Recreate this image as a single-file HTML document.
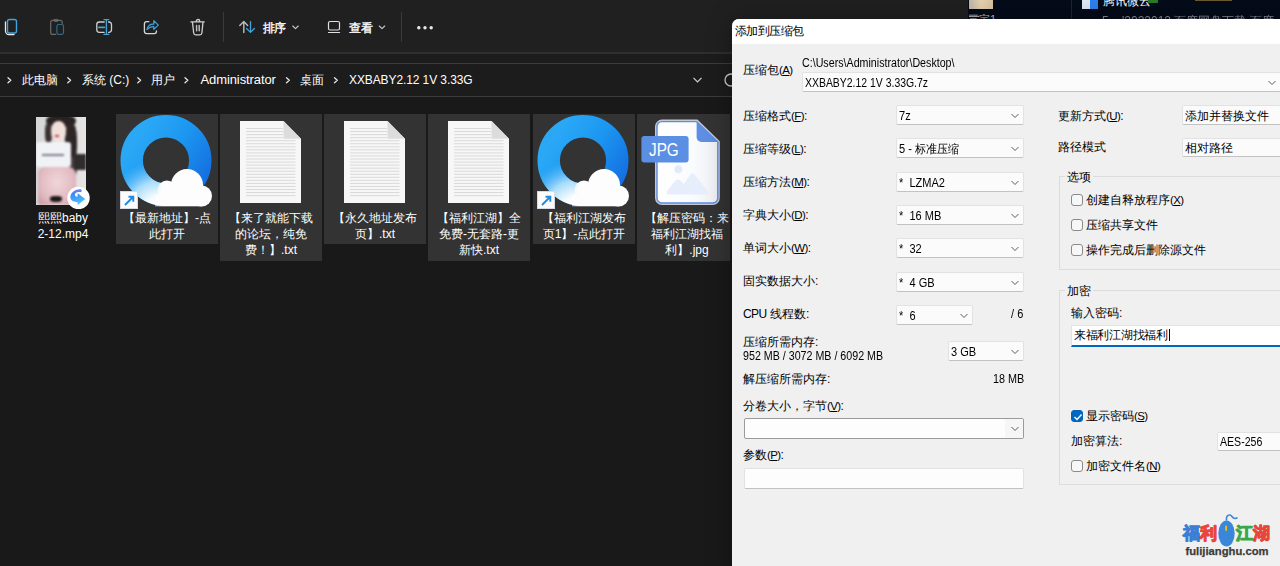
<!DOCTYPE html>
<html><head><meta charset="utf-8">
<style>
*{box-sizing:border-box;margin:0;padding:0}
html,body{width:1280px;height:566px;overflow:hidden;background:#191919;font-family:"Liberation Sans",sans-serif;}
.a{position:absolute}
.bc{color:#ffffff;font-size:12px;top:73px;white-space:nowrap;line-height:14px}
.item{background:#333333}
.lbl{color:#ffffff;font-size:12px;line-height:16px;text-align:center;white-space:nowrap}
.t{color:#000;font-size:12px;white-space:nowrap;line-height:14px}
.n{display:inline-block;transform-origin:0 50%}
.mn{font-size:11.5px;letter-spacing:-0.6px}
.cb{background:#fbfbfb;border:1px solid #e2e2e2;border-bottom-color:#c2c2c2;border-radius:2px}
.cbt{font-size:12px;color:#000;white-space:nowrap;line-height:14px}
.dd{width:10px;height:6px}
.chk{width:12px;height:12px;border:1px solid #8a8a8a;border-radius:3px;background:#f7f7f7}
.grp{border:1px solid #dcdcdc}
</style></head><body>
<div class="a" style="left:0;top:0;width:1280px;height:53px;background:#202020"></div>
<div class="a" style="left:0;top:52px;width:1280px;height:2px;background:#2f2f2f"></div>
<div class="a" style="left:0;top:54px;width:1280px;height:9px;background:#1c1c1c"></div>
<div class="a" style="left:0;top:63px;width:1280px;height:34px;background:#1c1c1c;border-top:1px solid #3c3c3c;border-bottom:1px solid #3c3c3c"></div>

<div class="a" style="left:968px;top:0;width:312px;height:20px;background:#040b19"></div>
<div class="a" style="left:969px;top:0;width:24px;height:9px;background:linear-gradient(90deg,#bfb6a8,#e6d2b0 50%,#d8c3a0)"></div>
<div class="a" style="left:969px;top:16px;width:10px;height:1px;background:#aaa"></div>
<div class="a" style="left:968px;top:12px;color:#bbb;font-size:11px;line-height:14px">三宝1</div>
<div class="a" style="left:1071px;top:0;width:1px;height:19px;background:#1e2533"></div>
<div class="a" style="left:1082px;top:0;width:16px;height:9px;background:#2f80ed"></div>
<div class="a" style="left:1082px;top:0;width:8px;height:9px;background:#dfe9f7"></div>
<div class="a" style="left:1103px;top:-6px;color:#fff;font-size:12px;line-height:14px">腾讯微云</div>
<div class="a" style="left:1148px;top:0;width:10px;height:3px;background:#2b7a2b"></div>
<div class="a" style="left:1195px;top:0;width:37px;height:1px;background:#6b5a30"></div>
<div class="a" style="left:1102px;top:14px;color:#aab;font-size:12px;line-height:14px;white-space:nowrap;opacity:.8">5... '2022012 百度网盘下载 百度</div>

<svg class="a" style="left:0;top:0" width="460" height="53" viewBox="0 0 460 53">
<g fill="none" stroke-linecap="round" stroke-linejoin="round">
 <path d="M5.5 22 V31 a3.5 3.5 0 0 0 3.5 3.5 H14" stroke="#e8e8e8" stroke-width="1.3"/>
 <rect x="7.5" y="19.5" width="9" height="13.5" rx="2" stroke="#40a3dc" stroke-width="1.4"/>
 <path d="M55.8 34.4 H52.7 a2 2 0 0 1 -2 -2 V22.3 a2 2 0 0 1 2 -2 H60.2 a2 2 0 0 1 2 2 V23.4" stroke="#6a6a6a" stroke-width="1.2"/>
 <ellipse cx="56" cy="20.3" rx="2.3" ry="1.1" stroke="#6a6a6a" stroke-width="1.1"/>
 <rect x="56.9" y="24.5" width="6.6" height="9.8" rx="1.8" stroke="#2d6b8f" stroke-width="1.2"/>
 <path d="M104.2 22 H99.3 a2.5 2.5 0 0 0 -2.5 2.5 V29.8 a2.5 2.5 0 0 0 2.5 2.5 H104.2" stroke="#cfcfcf" stroke-width="1.3"/>
 <path d="M108.6 22 H109 a2.5 2.5 0 0 1 2.5 2.5 V29.8 a2.5 2.5 0 0 1 -2.5 2.5 H108.6" stroke="#cfcfcf" stroke-width="1.3"/>
 <path d="M106.4 19.8 V34.2 M104 19.6 H108.8 M104 34.4 H108.8" stroke="#40a3dc" stroke-width="1.3"/>
 <path d="M98.9 27.3 H104.4" stroke="#40a3dc" stroke-width="1.8"/>
 <path d="M148.8 21.7 H146.7 a2.3 2.3 0 0 0 -2.3 2.3 V31.3 a2.3 2.3 0 0 0 2.3 2.3 H154.2 a2.3 2.3 0 0 0 2.3 -2.3 V30.8" stroke="#d6d6d6" stroke-width="1.3"/>
 <path d="M146.9 29.6 C148 25.5 151 23.9 153.8 24.2 V20.6 L158.3 25.1 L153.8 29.4 V26.6 C151.3 26.4 149 27.4 146.9 29.6 Z" stroke="#40a3dc" stroke-width="1.2"/>
 <path d="M190.9 21.9 H204.2 M196.3 21.9 V21 a1.7 1.5 0 0 1 3.4 0 V21.9 M192.4 21.9 L193.7 33 a2 2 0 0 0 2 1.8 H199.9 a2 2 0 0 0 2 -1.8 L203 21.9" stroke="#cfcfcf" stroke-width="1.3"/><path d="M196.6 25.6 V30.7 M199.2 25.6 V30.7" stroke="#bdbdbd" stroke-width="1.5"/>
 <path d="M243.8 32.6 V21.6 M239.8 25.6 L243.8 21.6 L247.6 25.4" stroke="#bdbdbd" stroke-width="1.4"/>
 <path d="M250.5 21.6 V32.4 M246.5 28.5 L250.5 32.4 L254.4 28.5" stroke="#40a3dc" stroke-width="1.3"/>
 <path d="M292.8 26 L295.5 28.7 L298.2 26" stroke="#c8c8c8" stroke-width="1.1"/>
 <rect x="328.5" y="21.5" width="11" height="8.5" rx="1.5" stroke="#e0e0e0" stroke-width="1.2"/>
 <path d="M328.5 32.5 H339.6" stroke="#e0e0e0" stroke-width="1.2"/>
 <path d="M379.3 26 L382 28.7 L384.7 26" stroke="#c8c8c8" stroke-width="1.1"/>
</g>
<g fill="#e8e8e8"><circle cx="418.8" cy="27.8" r="1.7"/><circle cx="425" cy="27.8" r="1.7"/><circle cx="431.2" cy="27.8" r="1.7"/></g>
<rect x="223" y="12" width="1" height="30" fill="#3a3a3a"/>
<rect x="401" y="12" width="1" height="30" fill="#3a3a3a"/>
</svg>
<div class="a" style="left:262.5px;top:21px;color:#fff;font-size:12px;line-height:14px;letter-spacing:-0.3px;-webkit-text-stroke:.35px #fff">排序</div>
<div class="a" style="left:349px;top:21px;color:#fff;font-size:12px;line-height:14px;letter-spacing:-0.3px;-webkit-text-stroke:.35px #fff">查看</div>
<svg class="a" style="left:0;top:63px" width="740" height="34" viewBox="0 0 740 34"><g fill="none" stroke="#e6e6e6" stroke-width="1.3" stroke-linecap="round" stroke-linejoin="round">
<path d="M8 14.8 L10.8 17.3 L8 19.8"/><path d="M67.8 14.8 L70.6 17.3 L67.8 19.8"/><path d="M137.8 14.8 L140.6 17.3 L137.8 19.8"/><path d="M185 14.8 L187.8 17.3 L185 19.8"/><path d="M286.5 14.8 L289.3 17.3 L286.5 19.8"/><path d="M334.5 14.8 L337.3 17.3 L334.5 19.8"/>
</g><path d="M693.5 14.8 L697.5 18.8 L701.5 14.8" fill="none" stroke="#d0d0d0" stroke-width="1.2"/>
<circle cx="731" cy="17" r="6" fill="none" stroke="#cfcfcf" stroke-width="1.3"/></svg>
<div class="a bc" style="left:22px;">此电脑</div>
<div class="a bc" style="left:82px;">系统 (C:)</div>
<div class="a bc" style="left:151px;">用户</div>
<div class="a bc" style="left:200.5px;font-size:13px;letter-spacing:-0.1px">Administrator</div>
<div class="a bc" style="left:300px;">桌面</div>
<div class="a bc" style="left:349px;letter-spacing:-0.1px">XXBABY2.12 1V 3.33G</div>
<div class="a item" style="left:116px;top:114px;width:102px;height:130px"></div>
<div class="a item" style="left:220px;top:114px;width:102px;height:147px"></div>
<div class="a item" style="left:324px;top:114px;width:102px;height:130px"></div>
<div class="a item" style="left:428px;top:114px;width:102px;height:147px"></div>
<div class="a item" style="left:533px;top:114px;width:102px;height:130px"></div>
<div class="a item" style="left:637px;top:114px;width:93px;height:147px"></div>
<div class="a" style="left:36px;top:117px;width:50px;height:88px;overflow:hidden;background:linear-gradient(90deg,#d6d6d8,#e6e4e3)">
<div class="a" style="left:0;top:0;width:50px;height:88px;filter:blur(1.3px)">
<div class="a" style="left:10px;top:-3px;width:30px;height:14px;border-radius:50%;background:#2a2122"></div>
<div class="a" style="left:9px;top:6px;width:7px;height:20px;border-radius:40%;background:#3a3030"></div>
<div class="a" style="left:29px;top:6px;width:12px;height:40px;border-radius:40%;background:#2e2526"></div>
<div class="a" style="left:33px;top:40px;width:8px;height:20px;border-radius:40%;background:#4a3e3e"></div>
<div class="a" style="left:15px;top:4px;width:15px;height:21px;border-radius:45%;background:#f1e0da"></div>
<div class="a" style="left:19px;top:18px;width:4px;height:2px;background:#c04060"></div>
<div class="a" style="left:0px;top:25px;width:35px;height:25px;border-radius:3px;background:#f1f2f6"></div>
<div class="a" style="left:6px;top:37px;width:22px;height:2px;background:#7a7e90"></div>
<div class="a" style="left:2px;top:50px;width:38px;height:38px;border-radius:20% 20% 10% 10%;background:radial-gradient(ellipse at 50% 40%,#efd6d9 0%,#e2bcc2 60%,#c995a0 100%)"></div>
<div class="a" style="left:38px;top:37px;width:12px;height:16px;background:#2f2c2e"></div>
<div class="a" style="left:14px;top:79px;width:12px;height:6px;background:#1e1819;border-radius:40%"></div>
</div></div>

<svg class="a" style="left:67px;top:186px" width="23" height="23" viewBox="0 0 23 23"><defs><linearGradient id="sa" x1="0" y1="0" x2="0.3" y2="1"><stop offset="0" stop-color="#a070f0"/><stop offset="0.35" stop-color="#3d8cf6"/><stop offset="1" stop-color="#4fc0fb"/></linearGradient></defs><circle cx="11.5" cy="12" r="11.2" fill="#fff"/><path d="M14.5 3.4 C7.5 2.6 3 7.5 3.4 11.8 C3.9 15 7 16.3 10.6 16.2 V18.9 L18.3 13 L10.6 7.2 V10.6 C8.6 10.8 7.5 9.6 8.1 8 C8.7 6.4 11 5.8 14.5 6.2 Z" fill="url(#sa)"/></svg>
<div class="a lbl" style="left:26px;top:210px;width:74px">熙熙baby<br>2-12.mp4</div>
<svg class="a" style="left:119px;top:114px" width="94" height="94" viewBox="0 0 94 94">
<defs><linearGradient id="g1" gradientUnits="userSpaceOnUse" x1="15" y1="30" x2="85" y2="75"><stop offset="0" stop-color="#2aa8f6"/><stop offset="0.45" stop-color="#1c97f1"/><stop offset="1" stop-color="#146ddf"/></linearGradient>
<radialGradient id="w1" gradientUnits="userSpaceOnUse" cx="40" cy="98" r="52"><stop offset="0" stop-color="#ffffff"/><stop offset="0.3" stop-color="#f6fcff"/><stop offset="0.6" stop-color="#a8dcfb"/><stop offset="1" stop-color="#60befa" stop-opacity="0"/></radialGradient>
<linearGradient id="m1" gradientUnits="userSpaceOnUse" x1="26" y1="0" x2="44" y2="0"><stop offset="0" stop-color="#fff" stop-opacity="0"/><stop offset="1" stop-color="#fff" stop-opacity="1"/></linearGradient>
<mask id="k1"><rect x="0" y="0" width="94" height="94" fill="url(#m1)"/></mask></defs>
<circle cx="47" cy="46.5" r="34.3" fill="none" stroke="url(#g1)" stroke-width="22.4"/>
<circle cx="47" cy="46.5" r="34.3" fill="none" stroke="url(#w1)" stroke-width="22.4"/>
<g fill="#fdfdfd" mask="url(#k1)"><circle cx="68" cy="71" r="16"/><circle cx="48" cy="76" r="9.5"/><circle cx="82.5" cy="82" r="10.5"/><rect x="36" y="80" width="47" height="12.3"/></g>
</svg>
<div class="a" style="left:119.5px;top:190.5px;width:18.5px;height:18.5px;background:#fbfbfb;border:1px solid #d6dae4"><svg class="a" style="left:2px;top:2px" width="13" height="13" viewBox="0 0 13 13"><path d="M2 11 L10 3 M5.5 2.8 H10.3 V7.8" fill="none" stroke="#1f8ae2" stroke-width="1.9"/></svg></div>
<svg class="a" style="left:536px;top:114px" width="94" height="94" viewBox="0 0 94 94">
<defs><linearGradient id="g2" gradientUnits="userSpaceOnUse" x1="15" y1="30" x2="85" y2="75"><stop offset="0" stop-color="#2aa8f6"/><stop offset="0.45" stop-color="#1c97f1"/><stop offset="1" stop-color="#146ddf"/></linearGradient>
<radialGradient id="w2" gradientUnits="userSpaceOnUse" cx="40" cy="98" r="52"><stop offset="0" stop-color="#ffffff"/><stop offset="0.3" stop-color="#f6fcff"/><stop offset="0.6" stop-color="#a8dcfb"/><stop offset="1" stop-color="#60befa" stop-opacity="0"/></radialGradient>
<linearGradient id="m2" gradientUnits="userSpaceOnUse" x1="26" y1="0" x2="44" y2="0"><stop offset="0" stop-color="#fff" stop-opacity="0"/><stop offset="1" stop-color="#fff" stop-opacity="1"/></linearGradient>
<mask id="k2"><rect x="0" y="0" width="94" height="94" fill="url(#m2)"/></mask></defs>
<circle cx="47" cy="46.5" r="34.3" fill="none" stroke="url(#g2)" stroke-width="22.4"/>
<circle cx="47" cy="46.5" r="34.3" fill="none" stroke="url(#w2)" stroke-width="22.4"/>
<g fill="#fdfdfd" mask="url(#k2)"><circle cx="68" cy="71" r="16"/><circle cx="48" cy="76" r="9.5"/><circle cx="82.5" cy="82" r="10.5"/><rect x="36" y="80" width="47" height="12.3"/></g>
</svg>
<div class="a" style="left:536.5px;top:190.5px;width:18.5px;height:18.5px;background:#fbfbfb;border:1px solid #d6dae4"><svg class="a" style="left:2px;top:2px" width="13" height="13" viewBox="0 0 13 13"><path d="M2 11 L10 3 M5.5 2.8 H10.3 V7.8" fill="none" stroke="#1f8ae2" stroke-width="1.9"/></svg></div>
<svg class="a" style="left:240px;top:121px" width="62" height="83" viewBox="0 0 62 83">
<path d="M0 0 H43.5 L61 17.8 V82 H0 Z" fill="#f7f7f7"/><rect x="6" y="7.00" width="37" height="1" fill="#d9d9d9"/><rect x="6" y="10.05" width="37" height="1" fill="#d9d9d9"/><rect x="6" y="13.10" width="37" height="1" fill="#d9d9d9"/><rect x="6" y="16.15" width="37" height="1" fill="#d9d9d9"/><rect x="6" y="19.20" width="49.5" height="1" fill="#d9d9d9"/><rect x="6" y="22.25" width="49.5" height="1" fill="#d9d9d9"/><rect x="6" y="25.30" width="49.5" height="1" fill="#d9d9d9"/><rect x="6" y="28.35" width="49.5" height="1" fill="#d9d9d9"/><rect x="6" y="31.40" width="49.5" height="1" fill="#d9d9d9"/><rect x="6" y="34.45" width="49.5" height="1" fill="#d9d9d9"/><rect x="6" y="37.50" width="49.5" height="1" fill="#d9d9d9"/><rect x="6" y="40.55" width="49.5" height="1" fill="#d9d9d9"/><rect x="6" y="43.60" width="49.5" height="1" fill="#d9d9d9"/><rect x="6" y="46.65" width="49.5" height="1" fill="#d9d9d9"/><rect x="6" y="49.70" width="49.5" height="1" fill="#d9d9d9"/><rect x="6" y="52.75" width="49.5" height="1" fill="#d9d9d9"/><rect x="6" y="55.80" width="49.5" height="1" fill="#d9d9d9"/><rect x="6" y="58.85" width="49.5" height="1" fill="#d9d9d9"/><rect x="6" y="61.90" width="49.5" height="1" fill="#d9d9d9"/><rect x="6" y="64.95" width="49.5" height="1" fill="#d9d9d9"/><rect x="6" y="68.00" width="49.5" height="1" fill="#d9d9d9"/><rect x="6" y="71.05" width="49.5" height="1" fill="#d9d9d9"/><rect x="6" y="74.10" width="49.5" height="1" fill="#d9d9d9"/>
<path d="M43.5 0 V17.8 H61 Z" fill="#dcdcdc"/></svg>
<svg class="a" style="left:344px;top:121px" width="62" height="83" viewBox="0 0 62 83">
<path d="M0 0 H43.5 L61 17.8 V82 H0 Z" fill="#f7f7f7"/><rect x="6" y="7.00" width="37" height="1" fill="#d9d9d9"/><rect x="6" y="10.05" width="37" height="1" fill="#d9d9d9"/><rect x="6" y="13.10" width="37" height="1" fill="#d9d9d9"/><rect x="6" y="16.15" width="37" height="1" fill="#d9d9d9"/><rect x="6" y="19.20" width="49.5" height="1" fill="#d9d9d9"/><rect x="6" y="22.25" width="49.5" height="1" fill="#d9d9d9"/><rect x="6" y="25.30" width="49.5" height="1" fill="#d9d9d9"/><rect x="6" y="28.35" width="49.5" height="1" fill="#d9d9d9"/><rect x="6" y="31.40" width="49.5" height="1" fill="#d9d9d9"/><rect x="6" y="34.45" width="49.5" height="1" fill="#d9d9d9"/><rect x="6" y="37.50" width="49.5" height="1" fill="#d9d9d9"/><rect x="6" y="40.55" width="49.5" height="1" fill="#d9d9d9"/><rect x="6" y="43.60" width="49.5" height="1" fill="#d9d9d9"/><rect x="6" y="46.65" width="49.5" height="1" fill="#d9d9d9"/><rect x="6" y="49.70" width="49.5" height="1" fill="#d9d9d9"/><rect x="6" y="52.75" width="49.5" height="1" fill="#d9d9d9"/><rect x="6" y="55.80" width="49.5" height="1" fill="#d9d9d9"/><rect x="6" y="58.85" width="49.5" height="1" fill="#d9d9d9"/><rect x="6" y="61.90" width="49.5" height="1" fill="#d9d9d9"/><rect x="6" y="64.95" width="49.5" height="1" fill="#d9d9d9"/><rect x="6" y="68.00" width="49.5" height="1" fill="#d9d9d9"/><rect x="6" y="71.05" width="49.5" height="1" fill="#d9d9d9"/><rect x="6" y="74.10" width="49.5" height="1" fill="#d9d9d9"/>
<path d="M43.5 0 V17.8 H61 Z" fill="#dcdcdc"/></svg>
<svg class="a" style="left:448px;top:121px" width="62" height="83" viewBox="0 0 62 83">
<path d="M0 0 H43.5 L61 17.8 V82 H0 Z" fill="#f7f7f7"/><rect x="6" y="7.00" width="37" height="1" fill="#d9d9d9"/><rect x="6" y="10.05" width="37" height="1" fill="#d9d9d9"/><rect x="6" y="13.10" width="37" height="1" fill="#d9d9d9"/><rect x="6" y="16.15" width="37" height="1" fill="#d9d9d9"/><rect x="6" y="19.20" width="49.5" height="1" fill="#d9d9d9"/><rect x="6" y="22.25" width="49.5" height="1" fill="#d9d9d9"/><rect x="6" y="25.30" width="49.5" height="1" fill="#d9d9d9"/><rect x="6" y="28.35" width="49.5" height="1" fill="#d9d9d9"/><rect x="6" y="31.40" width="49.5" height="1" fill="#d9d9d9"/><rect x="6" y="34.45" width="49.5" height="1" fill="#d9d9d9"/><rect x="6" y="37.50" width="49.5" height="1" fill="#d9d9d9"/><rect x="6" y="40.55" width="49.5" height="1" fill="#d9d9d9"/><rect x="6" y="43.60" width="49.5" height="1" fill="#d9d9d9"/><rect x="6" y="46.65" width="49.5" height="1" fill="#d9d9d9"/><rect x="6" y="49.70" width="49.5" height="1" fill="#d9d9d9"/><rect x="6" y="52.75" width="49.5" height="1" fill="#d9d9d9"/><rect x="6" y="55.80" width="49.5" height="1" fill="#d9d9d9"/><rect x="6" y="58.85" width="49.5" height="1" fill="#d9d9d9"/><rect x="6" y="61.90" width="49.5" height="1" fill="#d9d9d9"/><rect x="6" y="64.95" width="49.5" height="1" fill="#d9d9d9"/><rect x="6" y="68.00" width="49.5" height="1" fill="#d9d9d9"/><rect x="6" y="71.05" width="49.5" height="1" fill="#d9d9d9"/><rect x="6" y="74.10" width="49.5" height="1" fill="#d9d9d9"/>
<path d="M43.5 0 V17.8 H61 Z" fill="#dcdcdc"/></svg>
<svg class="a" style="left:638px;top:114px" width="92" height="96" viewBox="0 0 92 96">
<defs><linearGradient id="pg" x1="0" y1="0" x2="1" y2="0"><stop offset="0" stop-color="#ffffff"/><stop offset="0.6" stop-color="#fafbfd"/><stop offset="1" stop-color="#eceef3"/></linearGradient></defs>
<path d="M24 7.6 H58.6 L79.8 28 V84 a5 5 0 0 1 -5 5 H24 a5 5 0 0 1 -5 -5 V12.6 a5 5 0 0 1 5 -5 Z" fill="none" stroke="#e8eef8" stroke-width="4" opacity=".8"/>
<path d="M24 7.6 H58.6 L79.8 28 V84 a5 5 0 0 1 -5 5 H24 a5 5 0 0 1 -5 -5 V12.6 a5 5 0 0 1 5 -5 Z" fill="url(#pg)" stroke="#5d8ce2" stroke-width="1.4"/>
<path d="M58.6 7.6 V23 a5 5 0 0 0 5 5 H79.8 Z" fill="#5d8ee4"/>
<rect x="3.4" y="22" width="47.2" height="26.4" rx="3" fill="#5b8fe3"/>
<text x="11" y="42" font-family="Liberation Sans" font-size="18" fill="#fff" textLength="29.7" lengthAdjust="spacingAndGlyphs">JPG</text>
<circle cx="40.4" cy="55.2" r="4" fill="#e3ebfa"/>
<path d="M31 80.6 Q27 80.6 30 76 L37 67 Q40 64 43 67 L46 70 L52 61 Q54.5 57.5 57 61 L69 76 Q72 80.6 67 80.6 Z" fill="#e6eefb"/>
</svg>
<div class="a lbl" style="left:116px;top:210px;width:102px">【最新地址】-点<br>此打开</div>
<div class="a lbl" style="left:220px;top:210px;width:102px">【来了就能下载<br>的论坛，纯免<br>费！】.txt</div>
<div class="a lbl" style="left:324px;top:210px;width:102px">【永久地址发布<br>页】.txt</div>
<div class="a lbl" style="left:428px;top:210px;width:102px">【福利江湖】全<br>免费-无套路-更<br>新快.txt</div>
<div class="a lbl" style="left:533px;top:210px;width:102px">【福利江湖发布<br>页1】-点此打开</div>
<div class="a lbl" style="left:637px;top:210px;width:100px">【解压密码：来<br>福利江湖找福<br>利】.jpg</div>
<div class="a" style="left:732px;top:19px;width:560px;height:560px;background:#f0f0f0;border-top-left-radius:7px;overflow:hidden;box-shadow:0 2px 24px rgba(0,0,0,.35)">
<div class="a" style="left:0;top:0;width:100%;height:25px;background:#ffffff"></div>
<div class="a t" style="left:2.5px;top:5px;letter-spacing:-0.5px">添加到压缩包</div>
<div class="a t" style="left:11px;top:44px;">压缩包<span class=mn>(<u>A</u>)</span></div>
<div class="a t" style="left:70px;top:37px;"><span class="n" style="transform:scaleX(.89)">C:\Users\Administrator\Desktop\</span></div>
<div class="a cb" style="left:70px;top:53px;width:479px;height:20px"><div class="a cbt" style="left:2px;top:3px;transform:scaleX(0.87);transform-origin:0 50%">XXBABY2.12 1V 3.33G.7z</div><svg class="a dd" style="right:3px;top:7px" viewBox="0 0 10 6"><path d="M1.5 1 L5 4.5 L8.5 1" fill="none" stroke="#5a5a5a" stroke-width="1"/></svg></div>
<div class="a t" style="left:11px;top:90px;">压缩格式<span class=mn>(<u>F</u>)</span>:</div>
<div class="a cb" style="left:164px;top:86px;width:128px;height:20px"><div class="a cbt" style="left:2px;top:3px;transform:scaleX(0.92);transform-origin:0 50%">7z</div><svg class="a dd" style="right:3px;top:7px" viewBox="0 0 10 6"><path d="M1.5 1 L5 4.5 L8.5 1" fill="none" stroke="#5a5a5a" stroke-width="1"/></svg></div>
<div class="a t" style="left:11px;top:123px;">压缩等级<span class=mn>(<u>L</u>)</span>:</div>
<div class="a cb" style="left:164px;top:119px;width:128px;height:20px"><div class="a cbt" style="left:2px;top:3px;transform:scaleX(0.92);transform-origin:0 50%">5 - 标准压缩</div><svg class="a dd" style="right:3px;top:7px" viewBox="0 0 10 6"><path d="M1.5 1 L5 4.5 L8.5 1" fill="none" stroke="#5a5a5a" stroke-width="1"/></svg></div>
<div class="a t" style="left:11px;top:156px;">压缩方法<span class=mn>(<u>M</u>)</span>:</div>
<div class="a cb" style="left:164px;top:153px;width:128px;height:20px"><div class="a cbt" style="left:2px;top:3px;transform:scaleX(0.92);transform-origin:0 50%">* &nbsp;LZMA2</div><svg class="a dd" style="right:3px;top:7px" viewBox="0 0 10 6"><path d="M1.5 1 L5 4.5 L8.5 1" fill="none" stroke="#5a5a5a" stroke-width="1"/></svg></div>
<div class="a t" style="left:11px;top:189px;">字典大小<span class=mn>(<u>D</u>)</span>:</div>
<div class="a cb" style="left:164px;top:186px;width:128px;height:20px"><div class="a cbt" style="left:2px;top:3px;transform:scaleX(0.92);transform-origin:0 50%">* &nbsp;16 MB</div><svg class="a dd" style="right:3px;top:7px" viewBox="0 0 10 6"><path d="M1.5 1 L5 4.5 L8.5 1" fill="none" stroke="#5a5a5a" stroke-width="1"/></svg></div>
<div class="a t" style="left:11px;top:222px;">单词大小<span class=mn>(<u>W</u>)</span>:</div>
<div class="a cb" style="left:164px;top:219px;width:128px;height:20px"><div class="a cbt" style="left:2px;top:3px;transform:scaleX(0.92);transform-origin:0 50%">* &nbsp;32</div><svg class="a dd" style="right:3px;top:7px" viewBox="0 0 10 6"><path d="M1.5 1 L5 4.5 L8.5 1" fill="none" stroke="#5a5a5a" stroke-width="1"/></svg></div>
<div class="a t" style="left:11px;top:255px;">固实数据大小:</div>
<div class="a cb" style="left:164px;top:253px;width:128px;height:20px"><div class="a cbt" style="left:2px;top:3px;transform:scaleX(0.92);transform-origin:0 50%">* &nbsp;4 GB</div><svg class="a dd" style="right:3px;top:7px" viewBox="0 0 10 6"><path d="M1.5 1 L5 4.5 L8.5 1" fill="none" stroke="#5a5a5a" stroke-width="1"/></svg></div>
<div class="a t" style="left:11px;top:288px;"><span style="letter-spacing:-0.6px">CPU</span> 线程数:</div>
<div class="a cb" style="left:164px;top:286px;width:77px;height:20px"><div class="a cbt" style="left:2px;top:3px;transform:scaleX(0.92);transform-origin:0 50%">* &nbsp;6</div><svg class="a dd" style="right:3px;top:7px" viewBox="0 0 10 6"><path d="M1.5 1 L5 4.5 L8.5 1" fill="none" stroke="#5a5a5a" stroke-width="1"/></svg></div>
<div class="a t" style="left:279px;top:288px;"><span class="n" style="transform:scaleX(.92)">/ 6</span></div>
<div class="a t" style="left:11px;top:316px;">压缩所需内存:</div>
<div class="a t" style="left:11px;top:330px;"><span class="n" style="transform:scaleX(.89)">952 MB / 3072 MB / 6092 MB</span></div>
<div class="a cb" style="left:216px;top:322px;width:76px;height:20px"><div class="a cbt" style="left:2px;top:3px;transform:scaleX(0.92);transform-origin:0 50%">3 GB</div><svg class="a dd" style="right:3px;top:7px" viewBox="0 0 10 6"><path d="M1.5 1 L5 4.5 L8.5 1" fill="none" stroke="#5a5a5a" stroke-width="1"/></svg></div>
<div class="a t" style="left:11px;top:353px;">解压缩所需内存:</div>
<div class="a t" style="left:261px;top:353px;"><span class="n" style="transform:scaleX(.9)">18 MB</span></div>
<div class="a t" style="left:11px;top:380px;">分卷大小，字节<span class=mn>(<u>V</u>)</span>:</div>
<div class="a" style="left:12px;top:399px;width:280px;height:21px;background:#fdfdfd;border:1px solid #9a9a9a;border-radius:2px"><div class="a" style="right:0;top:0;width:18px;height:19px;background:#f6f6f6"></div><svg class="a dd" style="right:3px;top:7px" viewBox="0 0 10 6"><path d="M1.5 1 L5 4.5 L8.5 1" fill="none" stroke="#5a5a5a" stroke-width="1"/></svg></div>
<div class="a t" style="left:11px;top:429px;">参数<span class=mn>(<u>P</u>)</span>:</div>
<div class="a cb" style="left:12px;top:449px;width:280px;height:21px;background:#fdfdfd"></div>
<div class="a t" style="left:326px;top:90px;">更新方式<span class=mn>(<u>U</u>)</span>:</div>
<div class="a cb" style="left:450px;top:86px;width:108px;height:20px"><div class="a cbt" style="left:2px;top:3px;transform:scaleX(1);transform-origin:0 50%">添加并替换文件</div></div>
<div class="a t" style="left:326px;top:121px;">路径模式</div>
<div class="a cb" style="left:450px;top:119px;width:108px;height:19px"><div class="a cbt" style="left:2px;top:2px;transform:scaleX(1);transform-origin:0 50%">相对路径</div></div>
<div class="a grp" style="left:327px;top:157px;width:300px;height:94px"></div>
<div class="a t" style="left:333px;top:151px;background:#f0f0f0;padding:0 2px">选项</div>
<div class="a chk" style="left:339px;top:175px"></div>
<div class="a t" style="left:354px;top:174px;">创建自释放程序<span class=mn>(<u>X</u>)</span></div>
<div class="a chk" style="left:339px;top:200px"></div>
<div class="a t" style="left:354px;top:199px;">压缩共享文件</div>
<div class="a chk" style="left:339px;top:225px"></div>
<div class="a t" style="left:354px;top:224px;">操作完成后删除源文件</div>
<div class="a grp" style="left:327px;top:271px;width:300px;height:195px"></div>
<div class="a t" style="left:333px;top:265px;background:#f0f0f0;padding:0 2px">加密</div>
<div class="a t" style="left:339px;top:287px;">输入密码:</div>
<div class="a" style="left:339px;top:306px;width:300px;height:22px;background:#fff;border:1px solid #e3e3e3;border-bottom:2px solid #0067c0"><div class="a cbt" style="left:2px;top:2px;letter-spacing:-0.3px">来福利江湖找福利<span style="display:inline-block;width:1px;height:12px;background:#000;vertical-align:-2px;margin-left:1px"></span></div></div>
<div class="a chk" style="left:339px;top:391px;background:#0067c0;border-color:#0067c0"><svg class="a" style="left:1px;top:1px" width="10" height="10" viewBox="0 0 10 10"><path d="M1.5 5 L4 7.5 L8.5 2.5" fill="none" stroke="#fff" stroke-width="1.4"/></svg></div>
<div class="a t" style="left:354px;top:390px;">显示密码<span class=mn>(<u>S</u>)</span></div>
<div class="a t" style="left:339px;top:415px;">加密算法:</div>
<div class="a cb" style="left:485px;top:413px;width:73px;height:19px"><div class="a cbt" style="left:2px;top:2px;transform:scaleX(0.88);transform-origin:0 50%">AES-256</div></div>
<div class="a chk" style="left:339px;top:441px"></div>
<div class="a t" style="left:354px;top:440px;">加密文件名<span class=mn>(<u>N</u>)</span></div>
</div>
<svg class="a" style="left:1180px;top:508px" width="95" height="52" viewBox="0 0 95 52">
<path d="M46.5 12.5 C46 9 47.5 6.5 50 7 C52.5 7.5 52 10.5 55 10.5 C56 10.5 57 10 57.5 9.5" fill="none" stroke="#3a86d8" stroke-width="1.6"/>
<ellipse cx="46.5" cy="25.5" rx="8.2" ry="13" fill="#3a86d8"/>
<rect x="45.2" y="17.5" width="1.8" height="5.5" rx=".9" fill="#f0c020"/>
<g font-family="Liberation Sans" font-weight="900" font-size="17" stroke-width="1.1" stroke-linejoin="round">
<text x="2.5" y="31" fill="#3a7fd5" stroke="#3a7fd5">福</text>
<text x="19.5" y="31" fill="#e8463a" stroke="#e8463a">利</text>
<text x="55.5" y="31" fill="#39a84a" stroke="#39a84a">江</text>
<text x="73" y="31" fill="#e8463a" stroke="#e8463a">湖</text></g>
<text x="5.5" y="46.5" font-family="Liberation Sans" font-weight="bold" font-size="10.5" fill="#3c3c3c" stroke="#3c3c3c" stroke-width=".25" textLength="83" lengthAdjust="spacingAndGlyphs">fulijianghu.com</text>
</svg>
</body></html>
